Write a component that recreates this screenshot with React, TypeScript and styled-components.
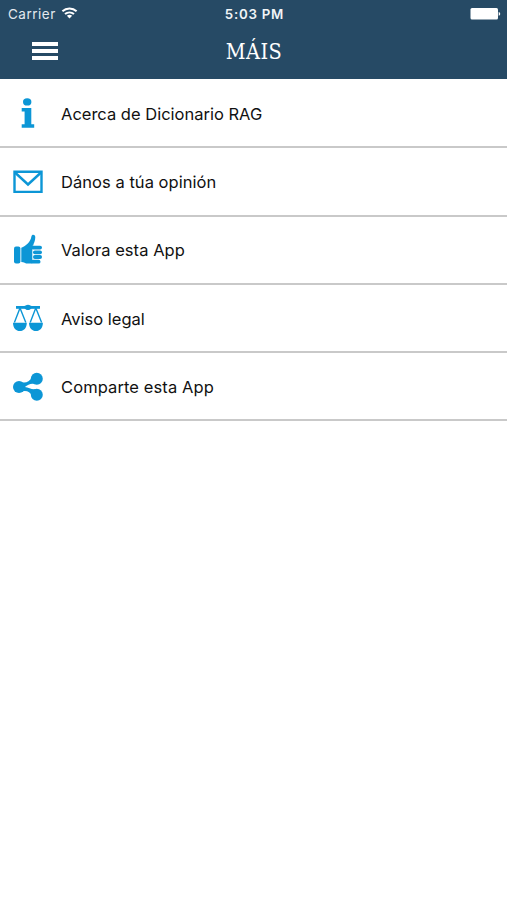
import React from "react";
import styled, { createGlobalStyle } from "styled-components";

const Global = createGlobalStyle`
  * { box-sizing: border-box; }
  body { margin: 0; background: #fff; font-family: Inter, "Liberation Sans", sans-serif; }
`;

const Screen = styled.div`
  width: 100%;
  min-height: 900px;
  background: #fff;
`;

const Header = styled.header`
  height: 79px;
  background: #264a65;
  color: #fff;
`;

const StatusBar = styled.div`
  display: grid;
  grid-template-columns: 1fr auto 1fr;
  align-items: center;
  height: 27px;
  padding: 0 6px 0 8px;
`;

const Carrier = styled.div`
  display: flex;
  align-items: center;
  gap: 5px;
  font-size: 13.5px;
  letter-spacing: 0.5px;
  color: #e3e9ee;
`;

const Time = styled.div`
  font-size: 13.3px;
  font-weight: 600;
  letter-spacing: 0.75px;
  color: #f0f4f7;
`;

const Battery = styled.svg`
  justify-self: end;
`;

const NavBar = styled.div`
  display: grid;
  grid-template-columns: 1fr auto 1fr;
  align-items: center;
  height: 48px;
  padding: 0 31px 0 32px;
`;

const MenuButton = styled.button`
  display: flex;
  flex-direction: column;
  gap: 3px;
  width: 26px;
  padding: 0;
  border: 0;
  background: none;
`;

const MenuLine = styled.span`
  width: 100%;
  height: 4px;
  background: #fff;
`;

const Title = styled.h1`
  margin: 0;
  font: 400 21.5px "DejaVu Serif Condensed", "DejaVu Serif", serif;
  font-stretch: condensed;
  letter-spacing: 0.5px;
`;

const List = styled.ul`
  margin: 0;
  padding: 1px 0 0;
  list-style: none;
`;

const Row = styled.li`
  display: flex;
  align-items: center;
  gap: 17px;
  height: 68.3px;
  padding: 1px 12px 0;
  border-bottom: 2px solid #c9c9c9;
`;

const Icon = styled.svg`
  flex: none;
  width: 32px;
  height: 34px;
  color: #0c96d6;
`;

const Label = styled.span<{ $tracking: number }>`
  font-size: 16.5px;
  line-height: 24px;
  letter-spacing: ${(p) => p.$tracking}px;
  color: #111;
  white-space: nowrap;
`;

const items = [
  {
    label: "Acerca de Dicionario RAG",
    tracking: 0,
    icon: (
      <g fill="currentColor">
        <ellipse cx="15.2" cy="4.9" rx="4.2" ry="3.7" />
        <path d="M9.7 11h9.6v16.2h2.9v3.6H9.7v-3.6h2.9V14.6H9.7z" />
      </g>
    ),
  },
  {
    label: "Dános a túa opinión",
    tracking: 0.04,
    icon: (
      <g fill="none" stroke="currentColor" strokeWidth="2.4">
        <path d="M2.5 6.7h27v20.2h-27z" />
        <path d="M3 7.5L16 19.5 29 7.5" />
      </g>
    ),
  },
  {
    label: "Valora esta App",
    tracking: 0.05,
    icon: (
      <g fill="currentColor">
        <rect x="2" y="13.4" width="6.4" height="17.2" rx="2" />
        <path d="M9.3 14.8C14 12.7 18.6 9 19.4 3.4 19.8.8 23.3 1.2 23.3 4.1c0 3.8-1.6 6.4-2.2 8.6h-.8V30.6H16c-3 0-3.8-1.7-6.7-1.7z" />
        <rect x="19" y="12.7" width="11" height="3.8" rx="1.9" />
        <rect x="21" y="17.4" width="9" height="3.8" rx="1.9" />
        <rect x="21" y="22.1" width="9" height="3.8" rx="1.9" />
        <rect x="19" y="26.8" width="9.5" height="3.8" rx="1.9" />
      </g>
    ),
  },
  {
    label: "Aviso legal",
    tracking: 0,
    icon: (
      <g>
        <path
          d="M4.5 5.5h23M8 6L2.4 20.5M8 6l5.8 14.5M23.8 6l-5.6 14.5M23.8 6l5.8 14.5"
          fill="none"
          stroke="currentColor"
          strokeWidth="1.4"
        />
        <path
          d="M4 4h8.2c1.6 0 2-1.2 3.8-1.2s2.2 1.2 3.8 1.2H28v2.7h-8.2c-1.6 0-2 1.4-3.8 1.4s-2.2-1.4-3.8-1.4H4zM1 20.7h13.8c0 5.2-3 8.4-6.9 8.4s-6.9-3.2-6.9-8.4zM17 20.7h13.9c0 5.2-3 8.4-6.9 8.4s-7-3.2-7-8.4z"
          fill="currentColor"
        />
      </g>
    ),
  },
  {
    label: "Comparte esta App",
    tracking: 0.1,
    icon: (
      <g fill="currentColor">
        <circle cx="7" cy="17" r="6" />
        <circle cx="24.8" cy="8.8" r="6" />
        <circle cx="24.8" cy="24.8" r="6" />
        <path d="M8.5 12c5 1.7 9-.2 11-4.2l3.4 6.4c-3.4-1.3-7 .3-10 2.8 3.8.6 7 2.9 10.5 2.1l-3.7 6.3c-1.5-3.6-6-5.9-11.2-3.4z" />
      </g>
    ),
  },
];

export default function App() {
  return (
    <Screen>
      <Global />
      <Header>
        <StatusBar>
          <Carrier>
            Carrier
            <svg width="17" height="13" viewBox="0 0 17 13" fill="none" stroke="#fff" strokeWidth="2">
              <path d="M1.4 4.3c4-3.8 10.2-3.8 14.2 0M4 7.1c2.6-2.3 6.4-2.3 9 0" />
              <path d="M5.9 8.8c1.5-1.3 3.7-1.3 5.2 0L8.5 11.5z" fill="#fff" stroke="none" />
            </svg>
          </Carrier>
          <Time>5:03 PM</Time>
          <Battery width="31" height="13" viewBox="0 0 31 13" fill="#fff">
            <rect x="0.5" y="1" width="27.5" height="11.5" rx="1.5" />
            <path d="M28.7 5c2 .4 2 3.4 0 3.8z" />
          </Battery>
        </StatusBar>
        <NavBar>
          <MenuButton aria-label="Menú">
            <MenuLine />
            <MenuLine />
            <MenuLine />
          </MenuButton>
          <Title>MÁIS</Title>
        </NavBar>
      </Header>
      <List>
        {items.map((item) => (
          <Row key={item.label}>
            <Icon viewBox="0 0 32 34">{item.icon}</Icon>
            <Label $tracking={item.tracking}>{item.label}</Label>
          </Row>
        ))}
      </List>
    </Screen>
  );
}
